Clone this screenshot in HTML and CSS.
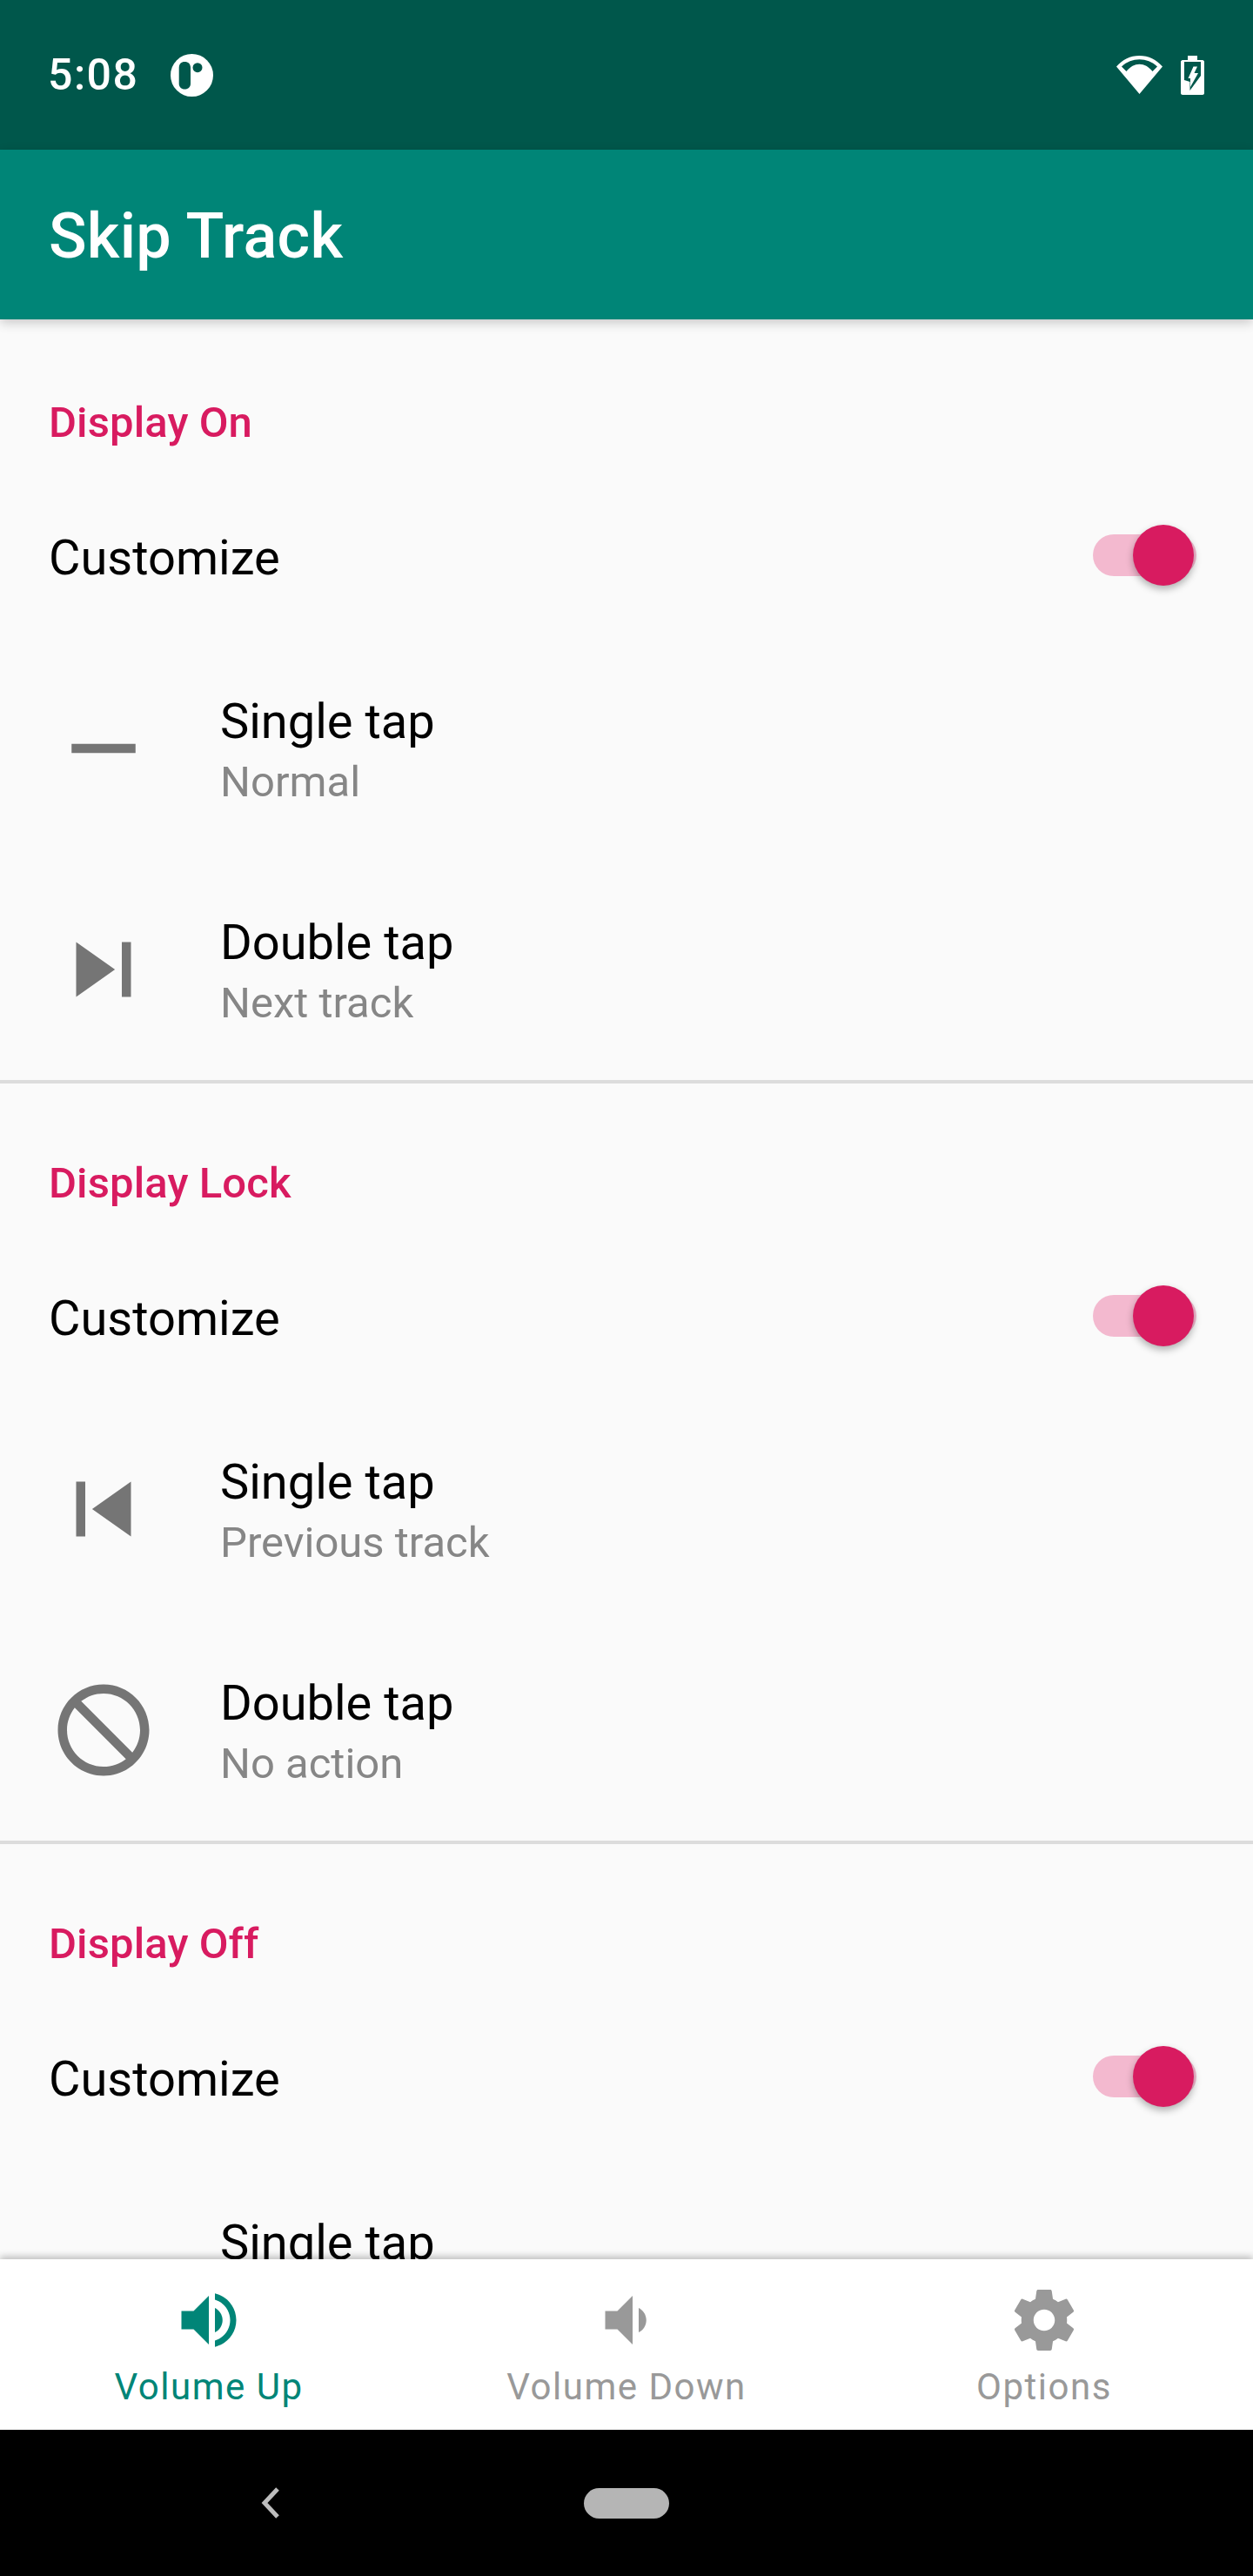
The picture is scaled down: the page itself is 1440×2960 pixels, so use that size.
FILE: index.html
```html
<!DOCTYPE html>
<html lang="en">
<head>
    <meta charset="UTF-8">
    <meta name="viewport" content="width=device-width, initial-scale=1.0">
    <title>Skip Track</title>
    <link rel="stylesheet" href="styles.css">
</head>
<body>
    <div class="status-bar">
        <span class="clock">5:08</span>
        <svg class="notif-icon" viewBox="0 0 49 49">
            <circle cx="24.500" cy="24.500" r="24.500" fill="#fff"/>
            <path d="M9.700 16c0-4.500 2.500-7 6.600-7s6.700 2.500 6.700 7v18c0 4-2.700 6.500-6.700 6.500S9.700 38 9.700 34z" fill="#00574b"/>
            <circle cx="31" cy="15.700" r="5.500" fill="#00574b"/>
        </svg>
        <div class="status-right">
            <svg class="wifi-icon" viewBox="0 0 53 44">
                <path fill="#fff" fill-rule="evenodd" d="M26.500 44 0 12.500C7 4.500 16 0 26.500 0S46 4.500 53 12.500zM6 12.500l5.500 5.500C16 12.500 21 9.700 26.500 9.700S37 12.500 41.500 18L47 12.500C41 7 34 4.300 26.500 4.300S12 7 6 12.500z"/>
            </svg>
            <svg class="battery-icon" viewBox="0 0 27 45">
                <path fill="#fff" fill-rule="evenodd" d="M8 0h11v5h6c1 0 2 1 2 2v36c0 1-1 2-2 2H2c-1 0-2-1-2-2V7c0-1 1-2 2-2h6zM4 7v21l6.500 2v10L23 23V7z"/>
                <path fill="#fff" d="M14.500 12.500H19L15.500 20H20L11 36V26H8.500z"/>
            </svg>
        </div>
    </div>
    <div class="toolbar">Skip Track</div>

    <div class="content">
        <section class="group">
            <div class="group-title">Display On</div>
            <div class="switch-row">
                <span class="switch-label">Customize</span>
                <div class="switch"><div class="switch-thumb"></div></div>
            </div>
            <div class="action-row">
                <svg class="action-icon" viewBox="0 0 24 24"><path d="M19 13H5v-2h14v2z"/></svg>
                <div class="action-text">
                    <div class="action-title">Single tap</div>
                    <div class="action-value">Normal</div>
                </div>
            </div>
            <div class="action-row">
                <svg class="action-icon" viewBox="0 0 24 24"><path d="M6 18l8.500-6L6 6v12zM16 6v12h2V6h-2z"/></svg>
                <div class="action-text">
                    <div class="action-title">Double tap</div>
                    <div class="action-value">Next track</div>
                </div>
            </div>
        </section>
        <section class="group">
            <div class="group-title">Display Lock</div>
            <div class="switch-row">
                <span class="switch-label">Customize</span>
                <div class="switch"><div class="switch-thumb"></div></div>
            </div>
            <div class="action-row">
                <svg class="action-icon" viewBox="0 0 24 24"><path d="M6 6h2v12H6zm3.500 6l8.500 6V6z"/></svg>
                <div class="action-text">
                    <div class="action-title">Single tap</div>
                    <div class="action-value">Previous track</div>
                </div>
            </div>
            <div class="action-row">
                <svg class="action-icon" viewBox="0 0 24 24"><path d="M12 2C6.480 2 2 6.480 2 12s4.480 10 10 10 10-4.480 10-10S17.520 2 12 2zm0 18c-4.420 0-8-3.580-8-8 0-1.850.63-3.550 1.690-4.900L16.900 18.310C15.550 19.370 13.850 20 12 20zm6.310-3.100L7.100 5.690C8.450 4.630 10.150 4 12 4c4.420 0 8 3.580 8 8 0 1.850-.63 3.550-1.690 4.900z"/></svg>
                <div class="action-text">
                    <div class="action-title">Double tap</div>
                    <div class="action-value">No action</div>
                </div>
            </div>
        </section>
        <section class="group">
            <div class="group-title">Display Off</div>
            <div class="switch-row">
                <span class="switch-label">Customize</span>
                <div class="switch"><div class="switch-thumb"></div></div>
            </div>
            <div class="action-row">
                <div class="action-icon"></div>
                <div class="action-text">
                    <div class="action-title">Single tap</div>
                </div>
            </div>
        </section>
    </div>

    <div class="bottom-nav">
        <div class="nav-item active">
            <svg class="nav-icon" viewBox="0 0 24 24"><path d="M3 9v6h4l5 5V4L7 9H3zm13.500 3c0-1.770-1.020-3.290-2.500-4.030v8.050c1.480-.73 2.500-2.250 2.500-4.020zM14 3.230v2.060c2.890.86 5 3.540 5 6.710s-2.110 5.850-5 6.710v2.060c4.010-.91 7-4.490 7-8.770s-2.990-7.860-7-8.770z"/></svg>
            <span class="nav-label">Volume Up</span>
        </div>
        <div class="nav-item">
            <svg class="nav-icon" viewBox="0 0 24 24"><path d="M18.500 12c0-1.770-1.020-3.290-2.500-4.030v8.050c1.480-.73 2.500-2.250 2.500-4.020zM5 9v6h4l5 5V4L9 9H5z"/></svg>
            <span class="nav-label">Volume Down</span>
        </div>
        <div class="nav-item">
            <svg class="nav-icon" viewBox="0 0 24 24"><path d="M19.430 12.980c.04-.32.07-.64.07-.98s-.03-.66-.07-.98l2.110-1.650c.19-.15.24-.42.12-.64l-2-3.460c-.12-.22-.39-.3-.61-.22l-2.490 1c-.52-.4-1.080-.73-1.690-.98l-.38-2.650C14.460 2.180 14.250 2 14 2h-4c-.25 0-.46.18-.49.42l-.38 2.650c-.61.25-1.170.59-1.690.98l-2.490-1c-.23-.09-.49 0-.61.22l-2 3.460c-.13.22-.07.49.12.64l2.110 1.650c-.04.32-.07.65-.07.98s.03.66.07.98l-2.110 1.650c-.19.15-.24.42-.12.64l2 3.460c.12.22.39.3.61.22l2.490-1c.52.4 1.080.73 1.690.98l.38 2.650c.03.24.24.42.49.42h4c.25 0 .46-.18.49-.42l.38-2.650c.61-.25 1.170-.59 1.690-.98l2.490 1c.23.09.49 0 .61-.22l2-3.460c.12-.22.07-.49-.12-.64l-2.110-1.650zM12 15.500c-1.930 0-3.500-1.570-3.500-3.500s1.570-3.500 3.500-3.500 3.500 1.570 3.500 3.500-1.570 3.500-3.500 3.500z"/></svg>
            <span class="nav-label">Options</span>
        </div>
    </div>

    <div class="system-nav">
        <svg class="back-icon" viewBox="0 0 22 36"><path d="M19 2 4 18l15 16" fill="none" stroke="#bdbdbd" stroke-width="5"/></svg>
        <div class="home-pill"></div>
    </div>
</body>
</html>
```

FILE: styles.css
```css
* {
    box-sizing: border-box;
}
body {
    margin: 0;
    height: 2960px;
    display: flex;
    flex-direction: column;
    overflow: hidden;
    font-family: Roboto, "Noto Sans", sans-serif;
    background: #fafafa;
}
.status-bar {
    height: 172px;
    flex: none;
    background: #00574b;
    display: flex;
    align-items: center;
    padding: 0 56px 0 55px;
    color: white;
}
.clock {
    width: 100px;
    font-size: 50px;
    font-weight: 500;
    letter-spacing: 1.5px;
    white-space: nowrap;
}
.notif-icon {
    width: 49px;
    height: 49px;
    margin-left: 41px;
}
.status-right {
    margin-left: auto;
    display: flex;
    align-items: center;
    gap: 21px;
}
.wifi-icon {
    width: 53px;
    height: 44px;
}
.battery-icon {
    width: 27px;
    height: 45px;
}
.toolbar {
    height: 195px;
    flex: none;
    background: #008577;
    color: white;
    font-size: 72px;
    font-weight: 500;
    letter-spacing: 0.25px;
    line-height: 191px;
    padding: 4px 0 0 56px;
    box-shadow: 0 4px 12px rgba(0,0,0,0.2);
    position: relative;
}
.content {
    flex: 1;
    overflow: hidden;
}
.group {
    height: 874px;
    position: relative;
}
.group::after {
    content: "";
    position: absolute;
    left: 0;
    right: 0;
    bottom: -4px;
    height: 4px;
    background: #dcdcdc;
}
.group-title {
    height: 182px;
    padding: 90px 0 0 56px;
    font-size: 49px;
    font-weight: 500;
    letter-spacing: 0.1px;
    line-height: 58px;
    color: #d81b60;
}
.switch-row {
    height: 184px;
    display: flex;
    align-items: center;
    justify-content: space-between;
    padding: 0 65px 0 56px;
}
.switch-label {
    font-size: 56px;
    color: #000;
}
.switch {
    width: 119px;
    height: 48px;
    margin-top: -6px;
    border-radius: 24px;
    background: #f3b9cf;
    position: relative;
}
.switch-thumb {
    position: absolute;
    top: -11px;
    right: 3px;
    width: 70px;
    height: 70px;
    border-radius: 50%;
    background: #d81b60;
    box-shadow: 0 4px 8px rgba(0,0,0,0.3);
}
.action-row {
    height: 254px;
    display: flex;
    align-items: center;
    padding-left: 56px;
}
.action-icon {
    width: 126px;
    height: 126px;
    fill: #757575;
    flex: none;
}
.action-text {
    height: 140px;
    margin-top: 6px;
    margin-left: 71px;
}
.action-title {
    font-size: 56px;
    line-height: 72px;
    color: #000;
}
.action-value {
    font-size: 49px;
    line-height: 68px;
    color: #868686;
}
.bottom-nav {
    height: 196px;
    flex: none;
    background: white;
    display: flex;
    box-shadow: 0 -3px 8px rgba(0,0,0,0.25);
    position: relative;
}
.nav-item {
    flex: 1;
    display: flex;
    flex-direction: column;
    align-items: center;
    padding-top: 28px;
    color: #999;
    fill: #999;
}
.nav-item.active {
    color: #008577;
    fill: #008577;
}
.nav-icon {
    width: 84px;
    height: 84px;
}
.nav-label {
    margin-top: 7px;
    font-size: 42px;
    line-height: 56px;
    letter-spacing: 1.5px;
}
.system-nav {
    height: 168px;
    flex: none;
    background: black;
    position: relative;
    display: flex;
    justify-content: center;
    align-items: center;
}
.back-icon {
    position: absolute;
    left: 300px;
    top: 66px;
    width: 22px;
    height: 36px;
}
.home-pill {
    width: 98px;
    height: 35px;
    border-radius: 18px;
    background: #b5b5b5;
}
```
